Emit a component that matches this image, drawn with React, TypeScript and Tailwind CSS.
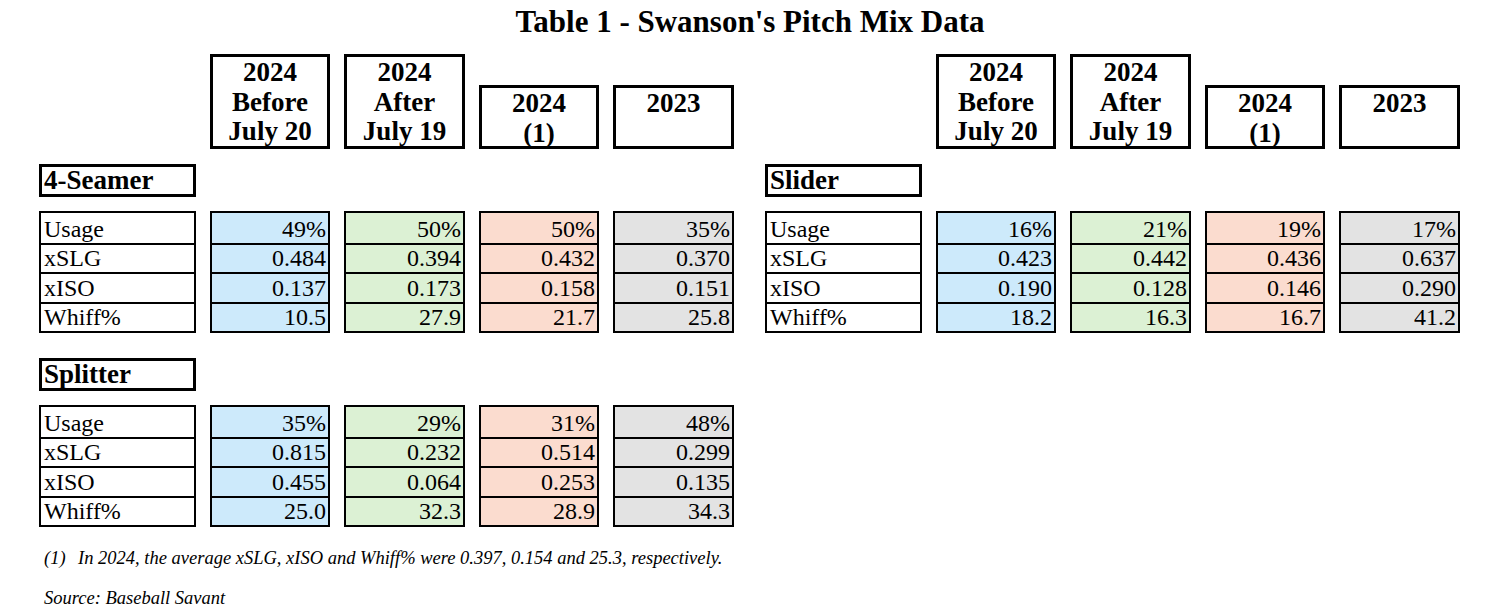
import React from "react";

const serif = { fontFamily: '"Liberation Serif", "Times New Roman", serif' };

const colColors = ["bg-[#cdeafb]", "bg-[#dcf1d4]", "bg-[#fbdccf]", "bg-[#e3e3e3]"];
const rowLabels = ["Usage", "xSLG", "xISO", "Whiff%"];

function HeaderRow() {
  return (
    <div className="grid grid-cols-[157px_120px_121px_120px_121px] gap-x-[14px] items-end">
      <div />
      <div className="h-[95px] pt-[1px] border-[3px] border-black flex flex-col items-center text-[27px] font-bold leading-[29.5px] text-black">
        <span>2024</span>
        <span>Before</span>
        <span>July 20</span>
      </div>
      <div className="h-[95px] pt-[1px] border-[3px] border-black flex flex-col items-center text-[27px] font-bold leading-[29.5px] text-black">
        <span>2024</span>
        <span>After</span>
        <span>July 19</span>
      </div>
      <div className="h-[64px] pt-[1px] border-[3px] border-black flex flex-col items-center text-[27px] font-bold leading-[29.5px] text-black">
        <span>2024</span>
        <span>(1)</span>
      </div>
      <div className="h-[64px] pt-[1px] border-[3px] border-black flex flex-col items-center text-[27px] font-bold leading-[29.5px] text-black">
        <span>2023</span>
      </div>
    </div>
  );
}

function Section({ label, data }: { label: string; data: string[][] }) {
  return (
    <div className="flex flex-col">
      <div className="w-[157px] h-[33px] border-[3px] border-black pl-[2px] flex items-center text-[27px] font-bold leading-none text-black">
        {label}
      </div>
      <div className="mt-[14px] grid grid-cols-[157px_120px_121px_120px_121px] gap-x-[14px]">
        <div className="border-2 border-black flex flex-col">
          {rowLabels.map((r, i) => (
            <div
              key={r}
              className={`h-[29.5px] pl-[3px] flex items-end text-[24px] leading-[28px] text-black ${i > 0 ? "border-t-2 border-black" : ""}`}
            >
              {r}
            </div>
          ))}
        </div>
        {data.map((col, ci) => (
          <div key={ci} className={`border-2 border-black flex flex-col ${colColors[ci]}`}>
            {col.map((v, i) => (
              <div
                key={i}
                className={`h-[29.5px] pr-[2px] flex items-end justify-end text-[24px] leading-[28px] text-black ${i > 0 ? "border-t-2 border-black" : ""}`}
              >
                {v}
              </div>
            ))}
          </div>
        ))}
      </div>
    </div>
  );
}

export default function App() {
  const seamer = [
    ["49%", "0.484", "0.137", "10.5"],
    ["50%", "0.394", "0.173", "27.9"],
    ["50%", "0.432", "0.158", "21.7"],
    ["35%", "0.370", "0.151", "25.8"],
  ];
  const slider = [
    ["16%", "0.423", "0.190", "18.2"],
    ["21%", "0.442", "0.128", "16.3"],
    ["19%", "0.436", "0.146", "16.7"],
    ["17%", "0.637", "0.290", "41.2"],
  ];
  const splitter = [
    ["35%", "0.815", "0.455", "25.0"],
    ["29%", "0.232", "0.064", "32.3"],
    ["31%", "0.514", "0.253", "28.9"],
    ["48%", "0.299", "0.135", "34.3"],
  ];
  return (
    <div className="w-[1500px] h-[615px] bg-white overflow-hidden text-black" style={serif}>
      <div className="pt-[4px] text-center text-[31px] font-bold leading-[36px]">
        Table 1 - Swanson's Pitch Mix Data
      </div>
      <div className="mt-[14px] pl-[39px] flex gap-x-[31px] items-start">
        <div className="flex flex-col">
          <HeaderRow />
          <div className="mt-[15px]">
            <Section label="4-Seamer" data={seamer} />
          </div>
          <div className="mt-[25px]">
            <Section label="Splitter" data={splitter} />
          </div>
          <div className="mt-[19px] pl-[5px] flex text-[18.5px] italic leading-[24px]">
            <span className="w-[34px]">(1)</span>
            <span>In 2024, the average xSLG, xISO and Whiff% were 0.397, 0.154 and 25.3, respectively.</span>
          </div>
          <div className="mt-[16px] pl-[5px] text-[18.5px] italic leading-[24px]">Source: Baseball Savant</div>
        </div>
        <div className="flex flex-col">
          <HeaderRow />
          <div className="mt-[15px]">
            <Section label="Slider" data={slider} />
          </div>
        </div>
      </div>
    </div>
  );
}
